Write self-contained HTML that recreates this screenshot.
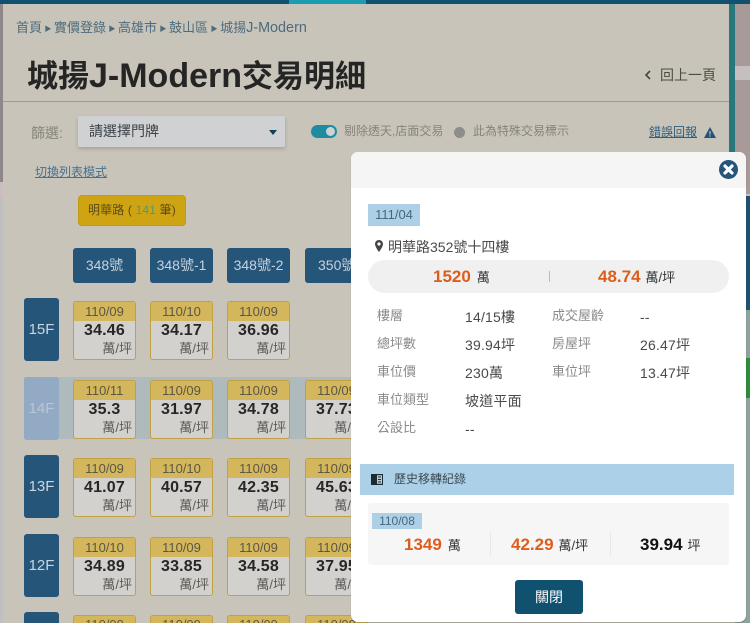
<!DOCTYPE html>
<html lang="zh-Hant"><head><meta charset="utf-8"><title>城揚J-Modern交易明細</title>
<style>
*{box-sizing:border-box}
html,body{margin:0;padding:0;width:750px;height:623px;overflow:hidden}
#p{position:absolute;left:0;top:0;width:750px;height:623px;overflow:hidden;background:#c9c4ba;font-family:"Liberation Sans","Noto Sans CJK TC",sans-serif;color:#333}
.a{position:absolute;white-space:nowrap}
.c{position:absolute;width:63px;height:59px;border:1px solid #c2a044;border-radius:3px;background:#d2d1ce;overflow:hidden;text-align:center}
.c i{display:block;font-style:normal;height:19px;background:#d4b75c;font-size:13px;line-height:20px;color:#5b5645}
.c b{display:block;font-size:16px;line-height:20px;color:#262626;letter-spacing:.2px}
.c u{display:block;text-decoration:none;font-size:13px;line-height:17px;text-align:right;padding-right:3px;color:#5a5a58;margin-top:-1px}
.c.e{height:8px;border-bottom:0;border-radius:3px 3px 0 0}
.c.e i{height:7px;line-height:18px}
.h{position:absolute;width:63px;height:35px;top:248px;background:#26557a;border-radius:3px;color:#c4d2dc;font-size:14px;line-height:35px;text-align:center;white-space:nowrap}
.f{position:absolute;left:24px;width:35px;height:63px;background:#26557a;border-radius:3px;color:#c9d6df;font-size:15px;line-height:63px;text-align:center}
.l{position:absolute;font-size:13px;color:#8a8a8a;white-space:nowrap;line-height:18px}
.v{position:absolute;font-size:14px;color:#4a4a4a;white-space:nowrap;line-height:18px;letter-spacing:.2px}
.o{color:#dd5e1c;font-weight:bold;font-size:17px}
.s{font-size:7px;margin:0 2.5px;vertical-align:1px}
.n{font-size:13px;color:#333}
</style></head><body>
<div id="p">
<!-- outer page edges -->
<div class="a" style="left:0;top:0;width:3px;height:182px;background:#8e8688"></div>
<div class="a" style="left:0;top:182px;width:3px;height:16px;background:#cbbfbd"></div>
<div class="a" style="left:0;top:198px;width:3px;height:425px;background:#bfbfc0"></div>
<div class="a" style="left:735px;top:4px;width:15px;height:190px;background:#a99a9a"></div>
<div class="a" style="left:735px;top:66px;width:15px;height:14px;background:#c6bfbf"></div>
<div class="a" style="left:735px;top:196px;width:15px;height:114px;background:#1f5270"></div>
<div class="a" style="left:735px;top:310px;width:15px;height:313px;background:#8ca49c"></div>
<div class="a" style="left:746px;top:358px;width:4px;height:40px;background:#2f8a3a"></div>
<div class="a" style="left:729px;top:4px;width:6px;height:190px;background:#27777d"></div>
<!-- top bar -->
<div class="a" style="left:0;top:0;width:750px;height:4px;background:#11506f"></div>
<div class="a" style="left:289px;top:0;width:77px;height:4px;background:#1b9cb3"></div>

<div class="a" style="left:16px;top:19px;font-size:13px;line-height:18px;color:#4d6b7d">首頁<span class="s">▶</span>實價登錄<span class="s">▶</span>高雄市<span class="s">▶</span>鼓山區<span class="s">▶</span>城揚<span style="font-size:14.4px">J-Modern</span></div>
<div class="a" style="left:27px;top:55px;font-size:31px;line-height:42px;font-weight:bold;color:#252525">城揚<span style="font-size:34px">J-Modern</span>交易明細</div>
<div class="a" style="left:644px;top:66px;font-size:14px;line-height:18px;color:#4b4b48"><svg width="8" height="10" viewBox="0 0 8 10" style="margin-right:8px"><path d="M6 1 2 5l4 4" fill="none" stroke="#444" stroke-width="1.6"/></svg>回上一頁</div>
<div class="a" style="left:3px;top:101px;width:726px;height:1px;background:#9c9a92"></div>

<div class="a" style="left:31px;top:124px;font-size:14px;line-height:18px;color:#86847d">篩選:</div>
<div class="a" style="left:78px;top:116px;width:207px;height:31px;background:#cfd1d3;border-radius:2px;box-shadow:0 2px 4px rgba(0,0,0,.18);font-size:14px;line-height:31px;padding-left:11px;color:#3d4348">請選擇門牌</div>
<div class="a" style="left:269px;top:130px;border-left:4px solid transparent;border-right:4px solid transparent;border-top:5px solid #123f5c"></div>
<div class="a" style="left:311px;top:125px;width:26px;height:13px;border-radius:7px;background:#1f8ba0"></div>
<div class="a" style="left:326px;top:127px;width:9px;height:9px;border-radius:50%;background:#ccd3d5"></div>
<div class="a" style="left:344px;top:123px;font-size:12px;line-height:17px;color:#85837c">剔除透天,店面交易</div>
<div class="a" style="left:454px;top:127px;width:11px;height:11px;border-radius:50%;background:#8d8d8b"></div>
<div class="a" style="left:473px;top:123px;font-size:12px;line-height:17px;color:#85837c">此為特殊交易標示</div>
<div class="a" style="left:649px;top:123px;font-size:12px;line-height:18px;color:#2f5e7e;text-decoration:underline">錯誤回報</div>
<svg class="a" style="left:704px;top:127px" width="12" height="11" viewBox="0 0 12 11"><path d="M6 0 12 11H0Z" fill="#24527a"/><path d="M5.400 4h1.200v3.600H5.400zM5.400 8.400h1.200v1.200H5.400z" fill="#c9c4ba"/></svg>

<div class="a" style="left:35px;top:164px;font-size:12px;line-height:17px;color:#47708c;text-decoration:underline">切換列表模式</div>
<div class="a" style="left:78px;top:195px;width:108px;height:31px;background:#cfa413;border:1px solid #c39a12;border-radius:4px;font-size:12px;line-height:29px;padding-left:9px;color:#5a4a16;letter-spacing:.15px">明華路 ( <span style="color:#4f9a78">141</span> 筆)</div>

<div class="h" style="left:73px">348號</div>
<div class="h" style="left:150px">348號-1</div>
<div class="h" style="left:227px">348號-2</div>
<div class="h" style="left:305px;width:46px;border-radius:3px 0 0 3px;text-align:left;padding-left:13px;overflow:hidden">350號</div>

<!-- highlighted row -->
<div class="a" style="left:24px;top:377px;width:327px;height:62px;background:#afbabd"></div>

<div class="f" style="top:298px">15F</div>
<div class="f" style="top:377px;background:#93aac4;color:#b9c6d5">14F</div>
<div class="f" style="top:455px">13F</div>
<div class="f" style="top:534px">12F</div>
<div class="f" style="top:612px;height:11px;border-radius:3px 3px 0 0"></div>

<div class="c" style="left:73px;top:301px"><i>110/09</i><b>34.46</b><u>萬/坪</u></div>
<div class="c" style="left:150px;top:301px"><i>110/10</i><b>34.17</b><u>萬/坪</u></div>
<div class="c" style="left:227px;top:301px"><i>110/09</i><b>36.96</b><u>萬/坪</u></div>

<div class="c" style="left:73px;top:380px"><i>110/11</i><b>35.3</b><u>萬/坪</u></div>
<div class="c" style="left:150px;top:380px"><i>110/09</i><b>31.97</b><u>萬/坪</u></div>
<div class="c" style="left:227px;top:380px"><i>110/09</i><b>34.78</b><u>萬/坪</u></div>
<div class="c" style="left:305px;top:380px"><i>110/09</i><b>37.73</b><u>萬/坪</u></div>

<div class="c" style="left:73px;top:458px"><i>110/09</i><b>41.07</b><u>萬/坪</u></div>
<div class="c" style="left:150px;top:458px"><i>110/10</i><b>40.57</b><u>萬/坪</u></div>
<div class="c" style="left:227px;top:458px"><i>110/09</i><b>42.35</b><u>萬/坪</u></div>
<div class="c" style="left:305px;top:458px"><i>110/09</i><b>45.63</b><u>萬/坪</u></div>

<div class="c" style="left:73px;top:537px"><i>110/10</i><b>34.89</b><u>萬/坪</u></div>
<div class="c" style="left:150px;top:537px"><i>110/09</i><b>33.85</b><u>萬/坪</u></div>
<div class="c" style="left:227px;top:537px"><i>110/09</i><b>34.58</b><u>萬/坪</u></div>
<div class="c" style="left:305px;top:537px"><i>110/09</i><b>37.95</b><u>萬/坪</u></div>

<div class="c e" style="left:73px;top:615px"><i>110/09</i></div>
<div class="c e" style="left:150px;top:615px"><i>110/09</i></div>
<div class="c e" style="left:227px;top:615px"><i>110/09</i></div>
<div class="c e" style="left:305px;top:615px"><i>110/09</i></div>

<!-- modal -->
<div class="a" style="left:351px;top:152px;width:395px;height:470px;background:#fff;border-radius:7px;overflow:hidden;box-shadow:0 1px 1px rgba(0,0,0,.2)">
<div class="a" style="left:0;top:0;width:395px;height:36px;background:#f5f5f5"></div>
</div>
<svg class="a" style="left:719px;top:160px" width="19" height="19" viewBox="0 0 19 19"><circle cx="9.500" cy="9.500" r="9.500" fill="#26557a"/><path d="M6 6l7 7M13 6l-7 7" stroke="#fff" stroke-width="3.200" stroke-linecap="round"/></svg>

<div class="a" style="left:368px;top:204px;width:52px;height:22px;background:#aed0e6;font-size:13px;line-height:22px;text-align:center;color:#47677f">111/04</div>
<svg class="a" style="left:375px;top:240px" width="8" height="12" viewBox="0 0 8 12"><path d="M4 0C1.800 0 0 1.800 0 4c0 2.800 4 8 4 8s4-5.200 4-8C8 1.800 6.200 0 4 0Zm0 5.600A1.600 1.600 0 1 1 4 2.400a1.600 1.600 0 0 1 0 3.200Z" fill="#444"/></svg>
<div class="a" style="left:388px;top:237px;font-size:14px;line-height:20px;color:#4a4a4a">明華路352號十四樓</div>
<div class="a" style="left:368px;top:260px;width:361px;height:33px;border-radius:17px;background:#f0f0f0"></div>
<div class="a" style="left:549px;top:271px;width:1px;height:11px;background:#bbb"></div>
<div class="a" style="left:433px;top:267px;line-height:20px"><span class="o">1520</span><span class="n" style="margin-left:6px">萬</span></div>
<div class="a" style="left:598px;top:267px;line-height:20px"><span class="o">48.74</span><span class="n" style="margin-left:5px">萬/坪</span></div>

<div class="l" style="left:377px;top:307px">樓層</div><div class="v" style="left:465px;top:308px">14/15樓</div>
<div class="l" style="left:552px;top:307px">成交屋齡</div><div class="v" style="left:640px;top:308px">--</div>
<div class="l" style="left:377px;top:335px">總坪數</div><div class="v" style="left:465px;top:336px">39.94坪</div>
<div class="l" style="left:552px;top:335px">房屋坪</div><div class="v" style="left:640px;top:336px">26.47坪</div>
<div class="l" style="left:377px;top:363px">車位價</div><div class="v" style="left:465px;top:364px">230萬</div>
<div class="l" style="left:552px;top:363px">車位坪</div><div class="v" style="left:640px;top:364px">13.47坪</div>
<div class="l" style="left:377px;top:391px">車位類型</div><div class="v" style="left:465px;top:392px">坡道平面</div>
<div class="l" style="left:377px;top:419px">公設比</div><div class="v" style="left:465px;top:420px">--</div>

<div class="a" style="left:360px;top:464px;width:374px;height:31px;background:#acd0e7"></div>
<svg class="a" style="left:371px;top:474px" width="12" height="11" viewBox="0 0 12 11"><path d="M0 0h12v11H0z" fill="#1f2a30"/><path d="M6 1.200h5v8.600H6z" fill="#acd0e7"/><path d="M7 3h3M7 5.500h3M7 8h3" stroke="#1f2a30"/></svg>
<div class="a" style="left:394px;top:471px;font-size:12px;line-height:17px;color:#3c4a54">歷史移轉紀錄</div>

<div class="a" style="left:368px;top:503px;width:361px;height:62px;background:#f6f6f6;border-radius:3px"></div>
<div class="a" style="left:372px;top:513px;width:50px;height:16px;background:#aed0e6;font-size:12px;line-height:16px;text-align:center;color:#47677f">110/08</div>
<div class="a" style="left:490px;top:532px;width:1px;height:24px;background:#e8e8e8"></div>
<div class="a" style="left:610px;top:532px;width:1px;height:24px;background:#e8e8e8"></div>
<div class="a" style="left:404px;top:535px;line-height:20px"><span class="o">1349</span><span class="n" style="margin-left:6px">萬</span></div>
<div class="a" style="left:511px;top:535px;line-height:20px"><span class="o">42.29</span><span class="n" style="margin-left:5px">萬/坪</span></div>
<div class="a" style="left:640px;top:535px;line-height:20px"><span class="o" style="color:#111">39.94</span><span class="n" style="margin-left:5px">坪</span></div>

<div class="a" style="left:515px;top:580px;width:68px;height:34px;background:#115170;border-radius:3px;color:#fff;font-size:14px;line-height:34px;text-align:center">關閉</div>
</div>
</body></html>
